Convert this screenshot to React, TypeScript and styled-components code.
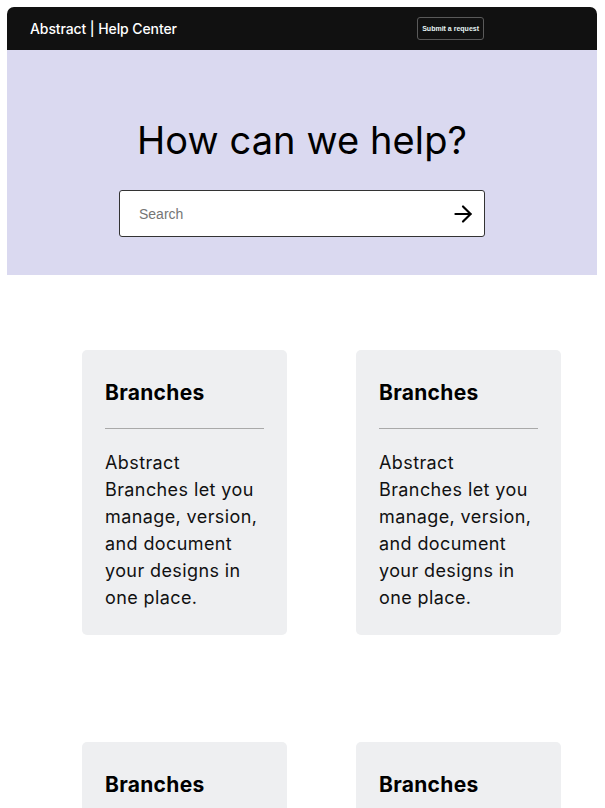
import styled, { createGlobalStyle } from "styled-components"
import { ArrowRight } from "lucide-react"

const Global = createGlobalStyle`
  body {
    margin: 7px 8px 0 7px;
    background: #fff;
    font-family: "Inter", "Liberation Sans", sans-serif;
    color: #111;
  }
  * { box-sizing: border-box; }
`

const Header = styled.header`
  height: 43px;
  background: #111111;
  border-top-left-radius: 7px;
  border-top-right-radius: 7px;
  display: flex;
  align-items: center;
  justify-content: space-between;
  padding: 0 113px 0 23px;

  h1 {
    margin: 0;
    color: #fff;
    font-size: 14px;
    font-weight: 500;
    letter-spacing: -0.1px;
  }
`

const RequestButton = styled.button`
  background: none;
  border: 1px solid #5a5a5a;
  border-radius: 3px;
  color: #e6f4f4;
  font-family: "Liberation Sans", sans-serif;
  font-size: 7px;
  font-weight: 700;
  height: 23px;
  padding: 0 4px;
`

const Hero = styled.section`
  background: #dad9f0;
  height: 225px;
  display: flex;
  flex-direction: column;
  align-items: center;
  padding-top: 66px;

  h2 {
    margin: 0 0 26px;
    font-size: 38px;
    font-weight: 400;
    line-height: 48px;
    color: #000;
    letter-spacing: 0.1px;
  }
`

const SearchBox = styled.div`
  width: 366px;
  height: 47px;
  background: #fff;
  border: 1px solid #333;
  border-radius: 3px;
  display: flex;
  align-items: center;
  justify-content: space-between;
  padding: 0 8px 0 17px;

  input {
    border: none;
    outline: none;
    background: none;
    font-family: "Liberation Sans", Arial, sans-serif;
    font-size: 14px;
    color: #222;
    flex: 1;

    &::placeholder {
      color: #757575;
    }
  }

  svg {
    color: #000;
  }
`

const CardGrid = styled.main`
  display: grid;
  grid-template-columns: 205px 205px;
  column-gap: 69px;
  row-gap: 107px;
  padding: 75px 0 40px 75px;
`

const Card = styled.article`
  background: #eeeff1;
  border-radius: 5px;
  padding: 28px 23px 24px;

  h3 {
    margin: 0;
    font-size: 21px;
    font-weight: 700;
    line-height: 29px;
    letter-spacing: 0.3px;
    color: #000;
  }

  hr {
    border: none;
    border-top: 1px solid #a9a9a9;
    margin: 21px 0 20px;
  }

  p {
    margin: 0;
    font-size: 18px;
    line-height: 27px;
    letter-spacing: 0.4px;
    color: #111;
  }
`

const cards = [1, 2, 3, 4]

export default function App() {
  return (
    <>
      <Global />
      <Header>
        <h1>Abstract | Help Center</h1>
        <RequestButton>Submit a request</RequestButton>
      </Header>
      <Hero>
        <h2>How can we help?</h2>
        <SearchBox>
          <input placeholder="Search" />
          <ArrowRight size={26} strokeWidth={2} />
        </SearchBox>
      </Hero>
      <CardGrid>
        {cards.map((c) => (
          <Card key={c}>
            <h3>Branches</h3>
            <hr />
            <p>Abstract Branches let you manage, version, and document your designs in one place.</p>
          </Card>
        ))}
      </CardGrid>
    </>
  )
}
